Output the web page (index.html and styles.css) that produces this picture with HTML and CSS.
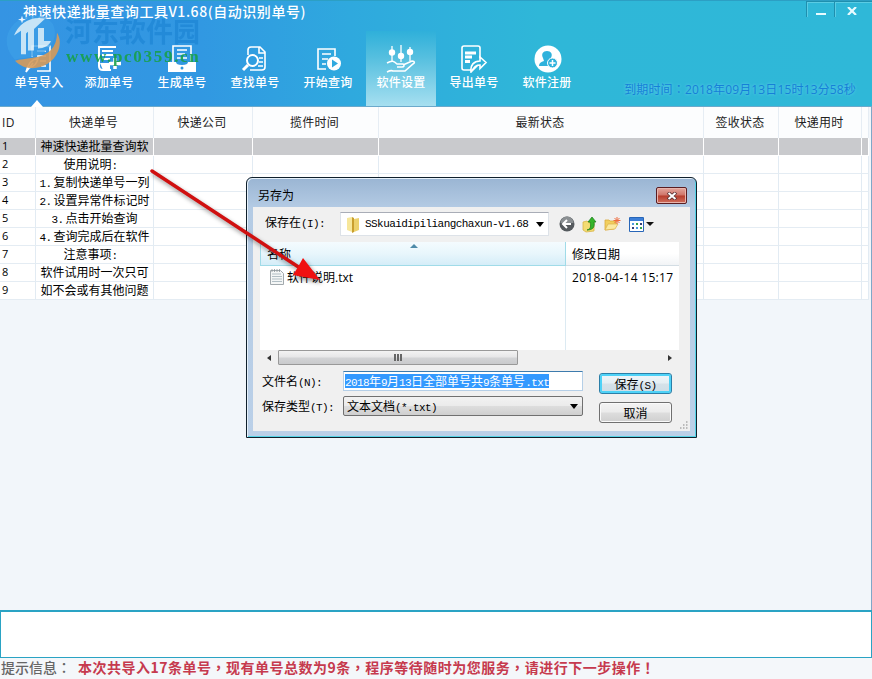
FILE: index.html
```html
<!DOCTYPE html>
<html lang="zh-CN">

<head>
    <meta charset="UTF-8">
    <title>神速快递批量查询工具</title>
    <link rel="stylesheet" href="styles.css">
</head>

<body>
    <div class="app">
        <div class="top">
            <div class="titlebar">
                <h1>神速快递批量查询工具<span>V1.68(</span>自动识别单号)</h1>
                <div class="winbtns">
                    <button class="min"><i></i></button>
                    <button class="cls"><svg width="10" height="8" viewBox="0 0 10 8"><path d="M1 0l8 8M9 0L1 8" stroke="#e8fbff" stroke-width="2.2"/></svg></button>
                </div>
            </div>
            <div class="toolbar">
                <a class="tool current">
                    <svg width="30" height="28" viewBox="0 0 30 28" fill="none" stroke="#fff" stroke-width="1.6"><path d="M8 12V1h18v25H13M13 6h9M13 11h9M16 16h6M17 21h5M2 27c2-8 5-13 12-14-1 7-5 9-9 10M2 27l7-9"/></svg>
                    <span>单号导入</span>
                </a>
                <a class="tool">
                    <svg width="30" height="28" viewBox="0 0 30 28" fill="none" stroke="#fff" stroke-width="2"><path d="M4 2h18M8 6h11M8 10h11M8 14h8M5 2v19c0 3 2 4 4 4h8"/><path d="M6 18h10v7H9z" fill="#fff" stroke="none"/><path d="M21 13v11M15 18.500h12" stroke-width="3.500"/></svg>
                    <span>添加单号</span>
                </a>
                <a class="tool">
                    <svg width="30" height="28" viewBox="0 0 30 28" fill="none" stroke="#fff" stroke-width="1.6"><path d="M6 17V1h18v16M10 5h10M10 9h8M10 13h10"/><path d="M1 17h8c0 2 2 3 6 3s6-1 6-3h8v10H1z" fill="#fff" stroke="none"/><circle cx="15" cy="23" r="1.500" fill="#3098df" stroke="none"/></svg>
                    <span>生成单号</span>
                </a>
                <a class="tool">
                    <svg width="30" height="28" viewBox="0 0 30 28" fill="none" stroke="#fff" stroke-width="1.600"><path d="M8 10V5q0-3 3-3h9l5 5v15q0 3-3 3H10M19 2v6h6M19 13h4M19 17h4M18 21h5"/><circle cx="12.500" cy="15.500" r="5.500" stroke-width="2"/><path d="M8 20l-5 5" stroke-width="3"/></svg>
                    <span>查找单号</span>
                </a>
                <a class="tool">
                    <svg width="30" height="28" viewBox="0 0 30 28" fill="none" stroke="#fff" stroke-width="1.600"><path d="M13 24H5V4h17v7M9 9h9M9 14h6M9 19h4"/><circle cx="21" cy="18.500" r="7" fill="#fff" stroke="none"/><path d="M19 14.500l6 4-6 4z" fill="#30a9df" stroke="none"/></svg>
                    <span>开始查询</span>
                </a>
                <a class="tool on">
                    <svg width="30" height="28" viewBox="0 0 30 28" fill="none" stroke="#fff" stroke-width="1.300"><path d="M6 1v15M15 0v17M24 2v14"/><g fill="#fff" stroke="none"><circle cx="6" cy="7.500" r="3.200"/><circle cx="15" cy="11" r="3.200"/><circle cx="24" cy="7" r="3.200"/></g><path d="M1 18c5-3 7-2 10 1h6c2 1 1 3-1 3h-5M17 20l9-4c3 0 3 2 1 3l-8 7H7c-2-1-4 0-6 1" stroke-width="1.600"/></svg>
                    <span>软件设置</span>
                </a>
                <a class="tool">
                    <svg width="30" height="28" viewBox="0 0 30 28" fill="none" stroke="#fff" stroke-width="1.600"><path d="M21 13V3q0-2-2-2H5q-2 0-2 2v20q0 2 2 2h7"/><path d="M6 8h11M6 12h7M6 16.500h5" stroke-width="3"/><path d="M12 27c-1-7 3-11 9-11v-4l6 5.500-6 6V20c-4 0-5 1-9 7zm0 0l7-7"/></svg>
                    <span>导出单号</span>
                </a>
                <a class="tool">
                    <svg width="30" height="28" viewBox="0 0 30 28"><circle cx="16" cy="14" r="13.500" fill="#fff"/><path d="M15 6c4 0 6 3 4 7l-1 3 2 2-1 3H7c0-3 2-4 5-5l-1-3c-2-4 0-7 4-7z" fill="#2fb2dc"/><circle cx="20.500" cy="18" r="5" fill="#2fb2dc" stroke="#fff" stroke-width="1"/><path d="M20.500 15v6M17.500 18h6" stroke="#fff" stroke-width="1.500"/></svg>
                    <span>软件注册</span>
                </a>
            </div>
            <div class="expire">到期时间<em lang="zh-TW">：</em>2018年09月13日15时13分58秒</div>
            <div class="watermark">
                <svg width="58" height="56" viewBox="0 0 58 60" preserveAspectRatio="none">
                    <path d="M10 50c12 14 36 9 43-10 3-8 2-15-1-20 0 16-8 24-24 27-7 1-13 2-18 3z" fill="#d59b5b"/>
                    <path d="M28 2C12 3 0 17 2 33c1 6 4 12 8 16 8-3 26-1 34-13 7-9 7-17 4-25C43 4 36 1 28 2z" fill="#3c9fe8" opacity=".85"/>
                    <path d="M16 43V18l-7 5C14 10 26 2 40 5L29 16v23h-6V19l-2 2v22zM33 37V15h6v14h7c-2 5-7 8-13 8z" fill="#d7edf9"/>
                    <path d="M17 2l1 3 3 1-3 1-1 3-1-3-3-1 3-1z" fill="#fff"/>
                </svg>
                <div class="wm-name">河东软件园</div>
                <div class="wm-url">www.pc0359.cn</div>
            </div>
        </div>

        <div class="main">
            <table class="grid">
                <colgroup><col class="c-id"><col class="c-no"><col class="c-co"><col class="c-time"><col class="c-last"><col class="c-sign"><col class="c-use"><col></colgroup>
                <thead>
                    <tr><th>ID</th><th>快递单号</th><th>快递公司</th><th>揽件时间</th><th>最新状态</th><th>签收状态</th><th>快递用时</th><th></th></tr>
                </thead>
                <tbody>
                    <tr class="sel"><td>1</td><td>神速快递批量查询软</td><td></td><td></td><td></td><td></td><td></td><td></td></tr>
                    <tr><td>2</td><td>使用说明<b>:</b></td><td></td><td></td><td></td><td></td><td></td><td></td></tr>
                    <tr><td>3</td><td><b>1.</b>复制快递单号一列</td><td></td><td></td><td></td><td></td><td></td><td></td></tr>
                    <tr><td>4</td><td><b>2.</b>设置异常件标记时</td><td></td><td></td><td></td><td></td><td></td><td></td></tr>
                    <tr><td>5</td><td><b>3.</b>点击开始查询</td><td></td><td></td><td></td><td></td><td></td><td></td></tr>
                    <tr><td>6</td><td><b>4.</b>查询完成后在软件</td><td></td><td></td><td></td><td></td><td></td><td></td></tr>
                    <tr><td>7</td><td>注意事项<b>:</b></td><td></td><td></td><td></td><td></td><td></td><td></td></tr>
                    <tr><td>8</td><td>软件试用时一次只可</td><td></td><td></td><td></td><td></td><td></td><td></td></tr>
                    <tr><td>9</td><td>如不会或有其他问题</td><td></td><td></td><td></td><td></td><td></td><td></td></tr>
                </tbody>
            </table>
        </div>
        <div class="log"></div>
        <div class="status"><span>提示信息<em lang="zh-TW">：</em></span><strong>本次共导入17条单号<em lang="zh-TW">，</em>现有单号总数为9条<em lang="zh-TW">，</em>程序等待随时为您服务<em lang="zh-TW">，</em>请进行下一步操作<em lang="zh-TW">！</em></strong></div>

        <div class="dialog">
            <div class="dlg-title">
                <span>另存为</span>
                <button class="dlg-close"><svg width="12" height="8" viewBox="0 0 12 8"><path d="M2 .5l8 7M10 .5l-8 7" stroke="#5b3233" stroke-width="3.600"/><path d="M2.500 1l7 6M9.500 1l-7 6" stroke="#fff" stroke-width="2"/></svg></button>
            </div>
            <div class="dlg-body">
                <div class="place">
                    <label>保存在<b>(I):</b></label>
                    <div class="path">
                        <svg width="14" height="17" viewBox="0 0 14 17"><path d="M1 2l5-1v15l-5-2z" fill="#f7e79b"/><path d="M6 1l2 1v14l-2 1z" fill="#c99f2e"/><path d="M8 3l5-1v12l-5 2z" fill="#ecd16c"/></svg>
                        <span>SSkuaidipiliangchaxun-v1.68</span>
                        <i class="down"></i>
                    </div>
                    <div class="nav">
                        <svg width="16" height="16" viewBox="0 0 16 16"><circle cx="8" cy="8" r="7.500" fill="#555a5e"/><path d="M1.500 7a6.500 6.500 0 0 1 13 0z" fill="#8a8f92"/><path d="M8 4L4 8l4 4M4.500 8H12" fill="none" stroke="#fff" stroke-width="2"/></svg>
                        <svg width="15" height="17" viewBox="0 0 15 17"><path d="M1 6l4-1 1 1h6v9l-8 1-3-2z" fill="#f3dc72" stroke="#d9b548" stroke-width=".8"/><path d="M5 14c4-1 4-4 3-8H6l4-5 4 5h-2c1 5-1 8-7 8z" fill="#35b52a" stroke="#167a18" stroke-width=".7"/></svg>
                        <svg width="17" height="16" viewBox="0 0 17 16"><path d="M1 4h4l1 1h6v4l-2 4-9 1z" fill="#f2cf5d" stroke="#d9a93c" stroke-width=".8"/><path d="M4 8h10l-3 5-10 1z" fill="#fbeaa0" stroke="#dcb04a" stroke-width=".7"/><path d="M13 1v7M9.500 4.500h7M10.500 2l5 5M15.500 2l-5 5" stroke="#ef6b3e" stroke-width="1"/></svg>
                        <svg class="view" width="25" height="15" viewBox="0 0 25 15"><path d="M.5.5h14v14H.5z" fill="#fff" stroke="#2866b8"/><path d="M1 1h13v3H1z" fill="#3c7fd8"/><path d="M3 6h2v2H3zM7 10h2v2H7z" fill="#4c9be0"/><path d="M7 6h2v2H7zM11 10h2v2h-2z" fill="#35a24a"/><path d="M11 6h2v2h-2zM3 10h2v2H3z" fill="#333e78"/><path d="M17 5h8l-4 4z" fill="#111"/></svg>
                    </div>
                </div>
                <div class="files">
                    <div class="fhead">
                        <div class="fname">名称<i class="up"></i></div>
                        <div class="fdate">修改日期</div>
                    </div>
                    <div class="flist">
                        <div class="fname">
                            <svg width="14" height="16" viewBox="0 0 14 16"><path d="M.5 1.500h10l3 3v11H.5z" fill="#f4f6f6" stroke="#a2a9ad"/><path d="M2 5h9M2 7.500h10M2 10h10M2 12.500h10" stroke="#b1bec4"/><path d="M2 0v3M4.500 0v3M7 0v3M9.500 0v3" stroke="#8a9499" stroke-width=".8"/></svg>
                            <span>软件说明.txt</span>
                        </div>
                        <div class="fdate">2018-04-14 15:17</div>
                    </div>
                    <div class="hscroll"><i class="left"></i><div class="thumb"><i></i></div><i class="right"></i></div>
                </div>
                <div class="form">
                    <label>文件名<b>(N):</b></label>
                    <div class="input"><mark><b>2018</b>年<b>9</b>月<b>13</b>日全部单号共<b>9</b>条单号<b>.txt</b></mark></div>
                    <button class="btn save">保存<b>(S)</b></button>
                    <label>保存类型<b>(T):</b></label>
                    <div class="select"><span>文本文档<b>(*.txt)</b></span><i class="down"></i></div>
                    <button class="btn">取消</button>
                </div>
                <svg class="grip" width="9" height="9" viewBox="0 0 9 9"><path d="M7 1h2M4 4h2M7 4h2M1 7h2M4 7h2M7 7h2" stroke="#bbb" stroke-width="2" stroke-dasharray="1.500 .5"/></svg>
            </div>
        </div>

        <svg class="arrow" width="190" height="130" viewBox="0 0 190 130">
            <path d="M9 8l148 97" stroke="#d01010" stroke-width="3.500" stroke-linecap="round"/>
            <path d="M177 117l-27-5 5-8 5-9z" fill="#f01010"/>
        </svg>
    </div>
</body>

</html>
```

FILE: styles.css
```css
* {
    margin: 0;
    padding: 0;
    box-sizing: border-box;
}

body {
    width: 872px;
    height: 679px;
    overflow: hidden;
    font: 12px "Liberation Sans", "Noto Sans CJK SC", sans-serif;
    color: #000;
}

button {
    border: none;
    font: inherit;
}

i {
    display: block;
}

/* centred full-width punctuation */
em {
    font-style: normal;
    font-family: "Noto Sans CJK TC", sans-serif;
}

svg {
    display: block;
    flex: none;
}

/* half-width latin inside the song-style text */
b {
    font: 11px "Liberation Mono", monospace;
    letter-spacing: -.6px;
}

.app {
    position: relative;
    height: 679px;
    display: flex;
    flex-direction: column;
    background: #f2f6fa;
}

.top {
    position: relative;
    height: 107px;
    background: linear-gradient(90deg, #3594e3 0, #3198e2 200px, #2fa9de 350px, #2fb7d8 540px, #2fb8d8 100%);
    border-top: 1px solid #2c9fc4;
    border-bottom: 1px solid #6ba9cb;
}

.titlebar {
    height: 30px;
    display: flex;
    justify-content: space-between;
    padding-left: 23px;
}

.titlebar h1 {
    font: 500 14px/20px "Noto Sans CJK SC", sans-serif;
    letter-spacing: .55px;
    color: #fff;
    white-space: nowrap;
}

.winbtns {
    display: flex;
    height: 16px;
}

.winbtns button {
    background: none;
    border-left: 1px solid #1f8fae;
    border-top: 1px solid #1f8fae;
    box-shadow: inset 1px 1px #5acce4;
    display: flex;
    justify-content: center;
}

.min {
    width: 28px;
    padding-top: 11px;
}

.min i {
    width: 10px;
    height: 2px;
    background: #e8fbff;
}

.cls {
    width: 38px;
    padding: 5px 3px 0 0;
}

.toolbar {
    display: flex;
    gap: 3px;
    padding-left: 4px;
}

.tool {
    position: relative;
    width: 70px;
    height: 75px;
    padding-top: 14px;
    display: flex;
    flex-direction: column;
    align-items: center;
    color: #fff;
}

.tool:first-child {
    margin-right: -3px;
}

.tool span {
    font: 500 12px/18px "Noto Sans CJK SC", sans-serif;
    letter-spacing: .2px;
}

.tool.on {
    background: linear-gradient(#2fb0da, #55bfdf 35%, #a6dff0);
}

.tool.current::after {
    content: "";
    position: absolute;
    left: 27px;
    bottom: -1px;
    border: 6px solid transparent;
    border-top: 0;
    border-bottom: 7px solid #fff;
}

.expire {
    position: absolute;
    right: 16px;
    top: 79px;
    font: 12px/18px "Open Sans", "Noto Sans CJK SC", sans-serif;
    letter-spacing: .15px;
    color: #1580d8;
    text-shadow: 0 0 3px #6bd3ee;
}

.expire em {
    font-family: "Noto Sans CJK TC", sans-serif;
}

.watermark {
    position: absolute;
    left: 5px;
    top: 13px;
    opacity: .9;
}

.wm-name {
    position: absolute;
    left: 60px;
    top: 3px;
    font: 700 27px/28px "Noto Sans CJK SC", sans-serif;
    color: #1c85d5;
    opacity: .75;
    white-space: nowrap;
}

.wm-url {
    position: absolute;
    left: 61px;
    top: 32px;
    font: 700 17px/22px "Liberation Serif", serif;
    letter-spacing: 1.7px;
    color: #18a04b;
}

.main {
    flex: 1;
    padding-right: 2px;
    border-right: 1px solid #7fa7c8;
}

.grid {
    width: 869px;
    table-layout: fixed;
    border-collapse: separate;
    border-spacing: 0;
    background: #fff;
}

.c-id { width: 36px; }
.c-no { width: 118px; }
.c-co { width: 99px; }
.c-time { width: 126px; }
.c-last { width: 325px; }
.c-sign { width: 75px; }
.c-use { width: 83px; }

.grid th {
    height: 31px;
    padding: 0 2px 1px 0;
    background: #fcfdfe;
    border-right: 1px solid #e6edf4;
    font: 12px "Open Sans", "Noto Sans CJK SC", sans-serif;
    letter-spacing: .3px;
    color: #222;
}

.grid th:first-child {
    text-align: left;
    padding-left: 2px;
}

.grid td {
    height: 18px;
    line-height: 14px;
    padding-bottom: 1px;
    border-right: 1px solid #e2ebf3;
    border-bottom: 1px solid #e4ecf3;
    text-align: center;
    white-space: nowrap;
}

.grid td:nth-child(2) {
    font-family: "Noto Sans CJK SC", sans-serif;
}

.grid td b {
    display: inline-block;
    width: 14px;
    line-height: 10px;
    text-align: left;
}

.grid td:first-child {
    text-align: left;
    padding-left: 2px;
    font: 11px/14px "Open Sans", sans-serif;
}

.grid .sel td {
    background: #c9cacd;
    border-color: #fff;
}

.log {
    height: 48px;
    background: #fff;
    border: 1px solid #2aa3c4;
    border-top-width: 2px;
}

.status {
    height: 21px;
    padding-left: 1px;
    background: #f4f7fa;
    font: 500 14px/19px "Noto Sans CJK SC", sans-serif;
    color: #666;
    white-space: nowrap;
    display: flex;
    gap: 7px;
}

.status strong {
    font-weight: 700;
    color: #c63a4e;
    letter-spacing: .5px;
}

/* save-as window */
.dialog {
    position: absolute;
    left: 246px;
    top: 177px;
    width: 451px;
    height: 261px;
    padding: 0 6px 6px;
    border: 1px solid #10202c;
    border-radius: 6px 6px 0 0;
    background: linear-gradient(#9ab5d3, #b4cbe4 30px, #bbd0e8);
    box-shadow: inset 1px 1px #e6f1fa, inset -1px -1px #54d3e6;
    font-family: "Noto Sans CJK SC", sans-serif;
}

.dlg-title {
    height: 29px;
    display: flex;
    justify-content: space-between;
    padding: 8px 3px 0 5px;
    line-height: 18px;
}

.dlg-close {
    width: 31px;
    height: 17px;
    margin-top: 1px;
    border: 1px solid #5a1d22;
    border-radius: 2px;
    background: linear-gradient(#e3a79e, #cf7468 48%, #b63c2c 52%, #d0705e);
    display: flex;
    align-items: center;
    justify-content: center;
    box-shadow: inset 0 0 0 1px #e9b5ad;
}

.dlg-body {
    position: relative;
    height: 224px;
    background: #f0f0f0;
    padding: 5px 10px 0 7px;
}

.place {
    display: flex;
    align-items: center;
    height: 24px;
}

.place label {
    width: 80px;
    padding-left: 5px;
    height: 22px;
}

.path {
    width: 209px;
    height: 24px;
    border: 1px solid #dde2e8;
    border-top-color: #a9adb7;
    background: #fff;
    display: flex;
    align-items: center;
    padding: 0 4px 0 5px;
}

.path span {
    flex: 1;
    margin-left: 5px;
    font: 11px "Liberation Mono", monospace;
    letter-spacing: -.55px;
}

.down {
    border: 4px solid transparent;
    border-bottom: 0;
    border-top: 5px solid #000;
}

.nav {
    display: flex;
    align-items: center;
    gap: 7px;
    margin-left: 10px;
}

.view {
    margin-left: 1px;
}

.files {
    width: 419px;
    margin-top: 6px;
    background: #fff;
}

.fhead,
.flist {
    display: flex;
}

.fname {
    width: 306px;
    border-right: 1px solid #dceaf2;
}

.fdate {
    flex: 1;
    padding-left: 6px;
}

.fhead {
    height: 24px;
    line-height: 24px;
    background: linear-gradient(#fff, #fff 50%, #f2f4f6);
    border-bottom: 1px solid #d3dde4;
}

.fhead .fname {
    position: relative;
    padding-left: 6px;
    background: linear-gradient(#f4fbfe, #e8f6fc 50%, #d5edf8);
    border: 1px solid #a0dbe8;
    border-top: 0;
    height: 24px;
}

.up {
    position: absolute;
    left: 149px;
    top: 2px;
    border: 4px solid transparent;
    border-top: 0;
    border-bottom: 4px solid #4e8ba9;
}

.flist {
    height: 84px;
    line-height: 24px;
}

.flist .fname {
    display: flex;
    gap: 3px;
    padding: 0 0 0 10px;
}

.flist svg {
    margin-top: 3px;
}

.flist span,
.flist .fdate {
    font-family: "Open Sans", "Noto Sans CJK SC", sans-serif;
}

.flist .fdate {
    letter-spacing: .32px;
}

.hscroll {
    height: 15px;
    background: #f0f0f0;
    display: flex;
    align-items: center;
    padding: 0 7px;
}

.thumb {
    width: 240px;
    height: 15px;
    margin: 0 auto 0 7px;
    border: 1px solid #999;
    border-radius: 1px;
    background: linear-gradient(#f3f3f3, #e6e6e7 48%, #d3d4d6 52%, #c9cacc);
    display: flex;
    align-items: center;
    justify-content: center;
}

.thumb i {
    width: 8px;
    height: 7px;
    background: repeating-linear-gradient(90deg, #666 0 2px, transparent 2px 3px);
}

.left,
.right {
    border: 3px solid transparent;
}

.left {
    border-left: 0;
    border-right: 4px solid #333;
}

.right {
    border-right: 0;
    border-left: 4px solid #333;
}

.form {
    display: grid;
    grid-template-columns: 81px 240px 73px;
    grid-template-rows: 22px 22px;
    row-gap: 3px;
    margin-top: 6px;
    padding-left: 2px;
    line-height: 20px;
}

.form .btn {
    margin-left: 16px;
    width: 73px;
    height: 21px;
    margin-top: 6px;
    line-height: 18px;
    border: 1px solid #707070;
    border-radius: 3px;
    background: linear-gradient(#f3f3f3, #ebebeb 48%, #ddd 52%, #cfcfcf);
    box-shadow: inset 0 0 0 1px #fafafa;
}

.form .save {
    margin-top: 2px;
    border-color: #2b7fa8;
    background: linear-gradient(#f0f6f9, #e4eef3 48%, #d5e2e9 52%, #cddde6);
    box-shadow: inset 0 0 0 2px #4ed2f7;
}

.input {
    height: 20px;
    border: 1px solid #b5cfe7;
    border-top-color: #3d7bad;
    background: #fff;
    padding: 1px;
    line-height: 16px;
    white-space: nowrap;
}

.input mark {
    display: inline-block;
    height: 14px;
    line-height: 14px;
    background: #3399ff;
    color: #fff;
}

.select {
    height: 20px;
    border: 1px solid #707070;
    border-radius: 2px;
    background: linear-gradient(#f2f2f2, #ebebeb 48%, #ddd 52%, #cfcfcf);
    display: flex;
    align-items: center;
    justify-content: space-between;
    padding: 0 4px 0 3px;
}

.grip {
    position: absolute;
    right: 2px;
    bottom: 1px;
}

.arrow {
    position: absolute;
    left: 143px;
    top: 163px;
    filter: drop-shadow(2px 3px 2px rgba(0, 0, 0, .4));
    fill: none;
}
```
